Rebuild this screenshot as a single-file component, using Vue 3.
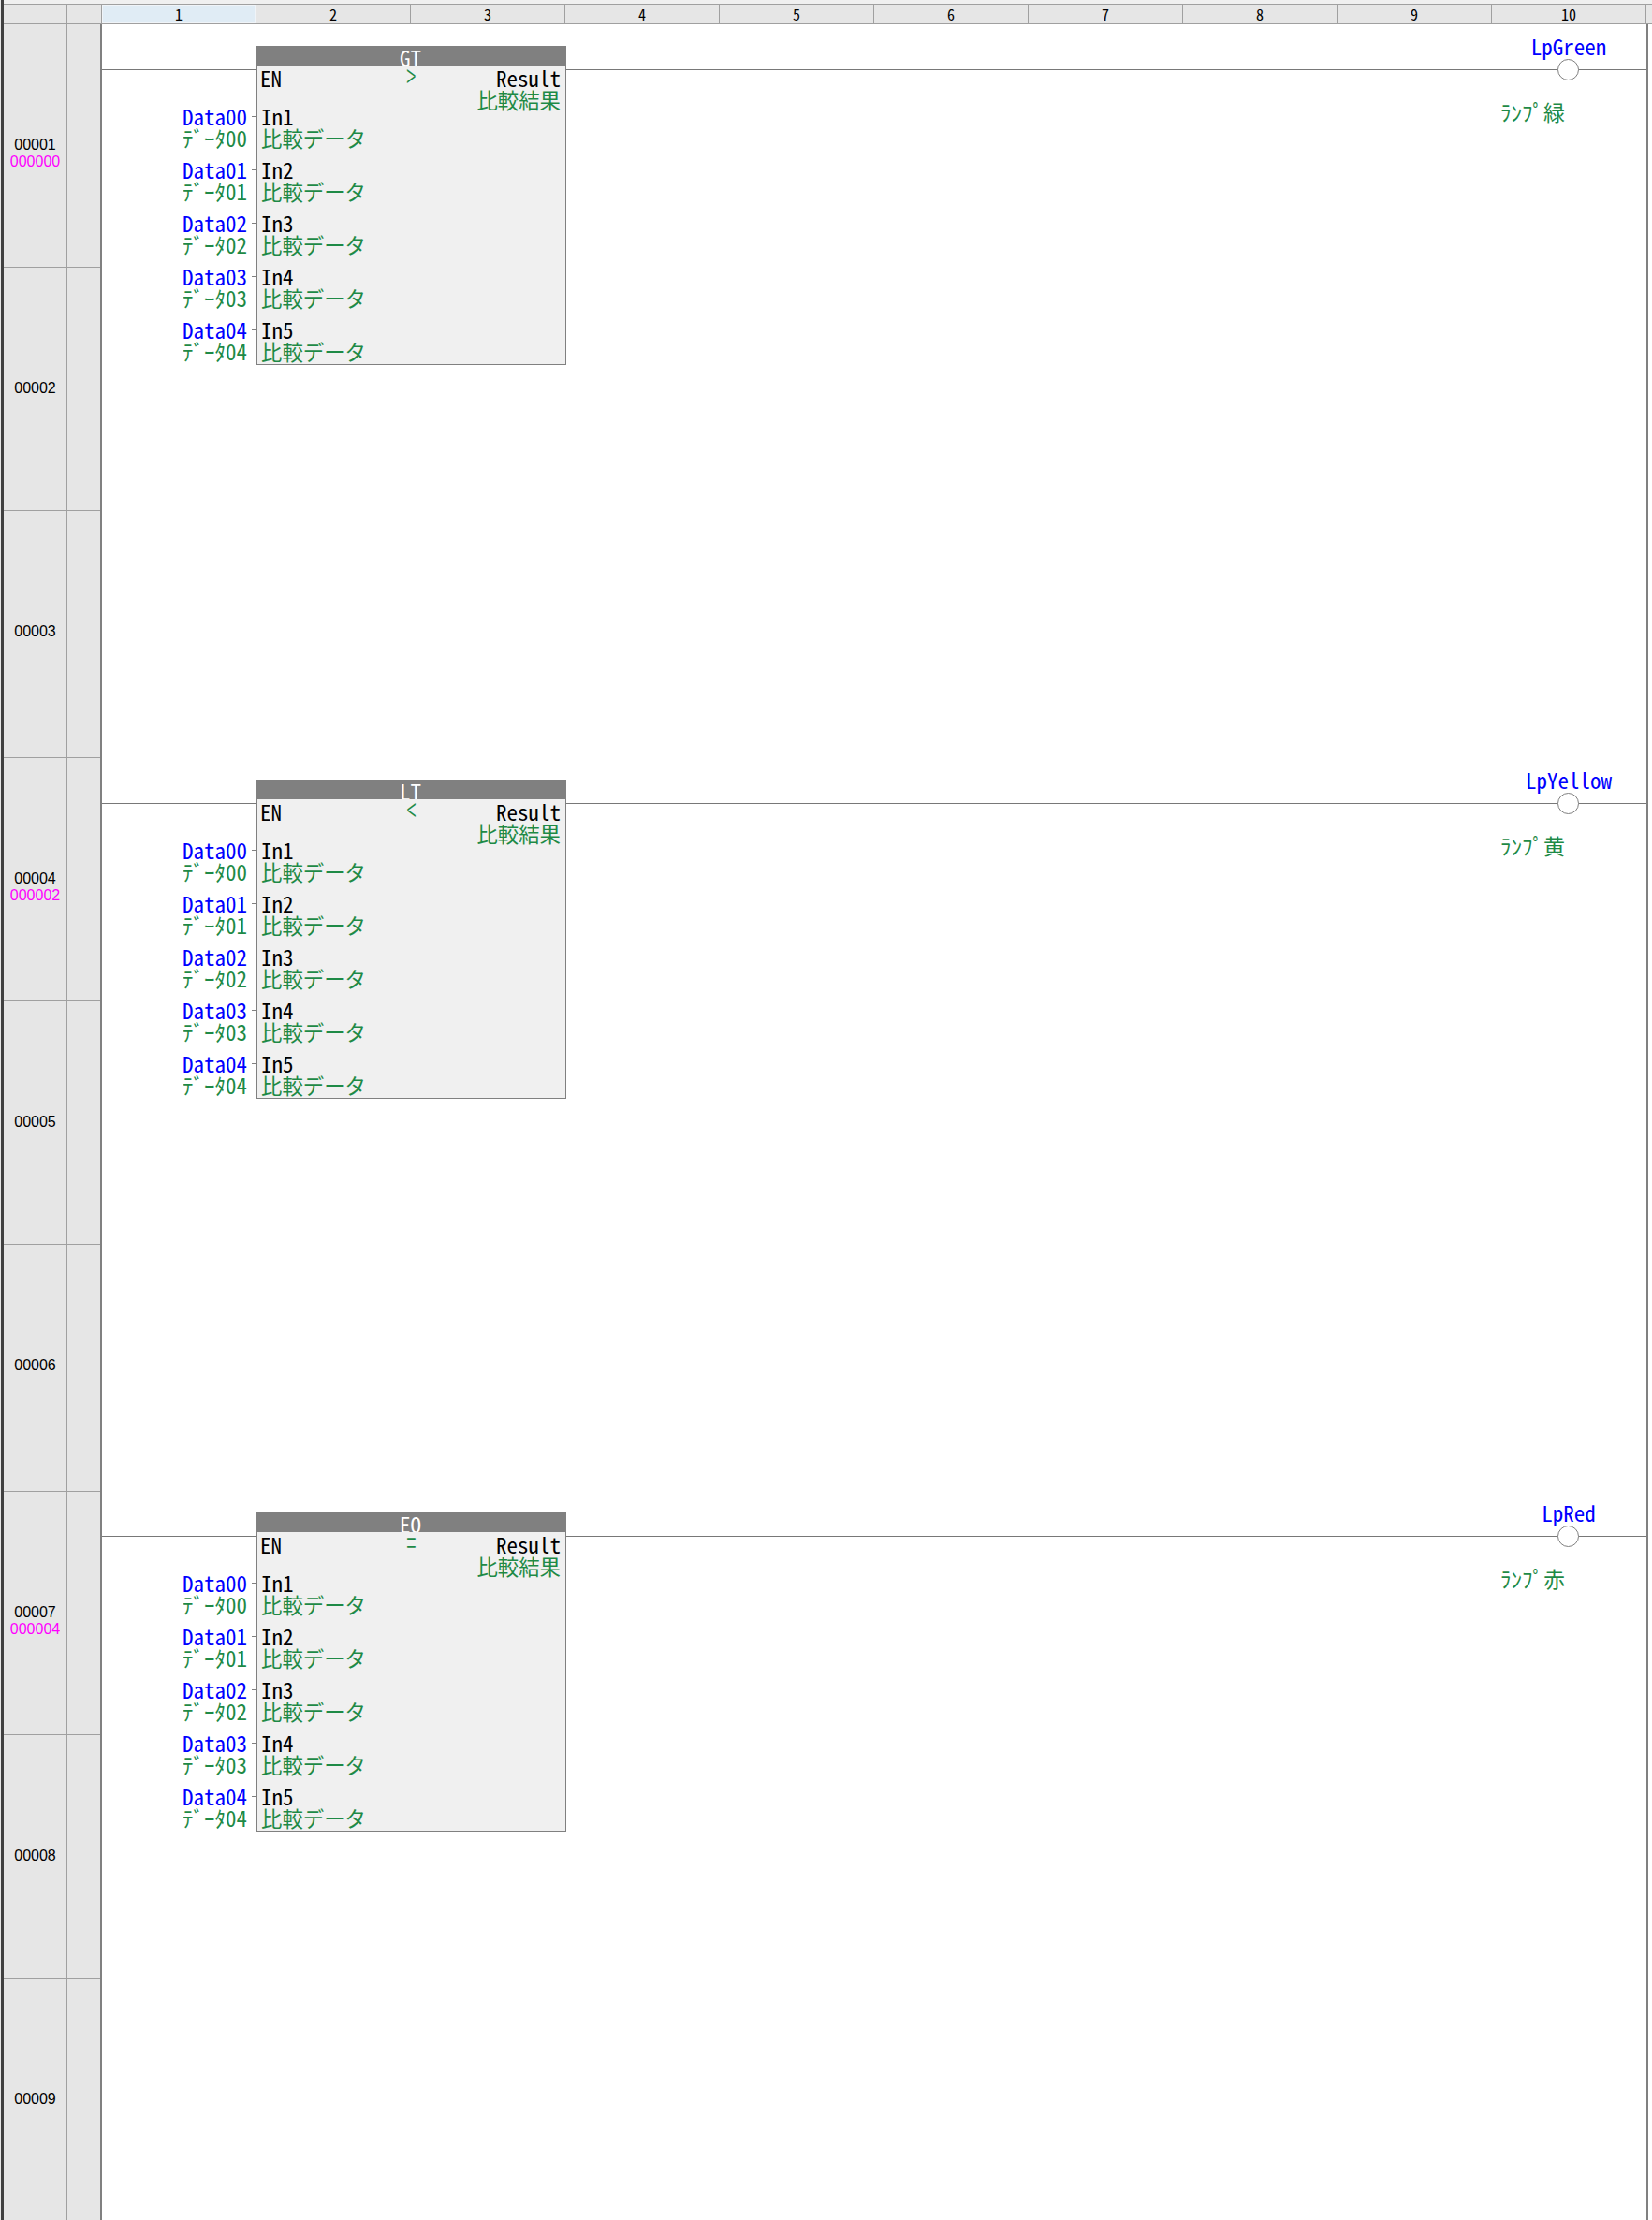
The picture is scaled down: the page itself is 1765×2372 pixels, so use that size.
<script setup>
const cols = [1, 2, 3, 4, 5, 6, 7, 8, 9, 10]
const rows = [
  { n: '00001', s: '000000', h: 260 }, { n: '00002', h: 260 }, { n: '00003', h: 264 },
  { n: '00004', s: '000002', h: 260 }, { n: '00005', h: 260 }, { n: '00006', h: 264 },
  { n: '00007', s: '000004', h: 260 }, { n: '00008', h: 260 }, { n: '00009', h: 264 },
]
const rungs = [
  { name: 'GT', op: '>', coil: 'LpGreen', note: 'ﾗﾝﾌﾟ', color: '緑' },
  { name: 'LT', op: '<', coil: 'LpYellow', note: 'ﾗﾝﾌﾟ', color: '黄' },
  { name: 'EQ', op: '=', coil: 'LpRed', note: 'ﾗﾝﾌﾟ', color: '赤' },
]
const inputs = [0, 1, 2, 3, 4]
</script>

<template>
  <div class="screen">
    <div class="rail"></div>
    <div class="main">
      <div class="top-strip"></div>
      <div class="head">
        <div class="corner c1"></div>
        <div class="corner c2"></div>
        <div v-for="c in cols" :key="c" class="col" :class="{ active: c === 1 }">{{ c }}</div>
      </div>
      <div class="body">
        <div class="gutter">
          <div v-for="r in rows" :key="r.n" class="row" :style="{ height: r.h + 'px' }">
            <div class="row-no">
              <span>{{ r.n }}</span>
              <span v-if="r.s" class="step">{{ r.s }}</span>
            </div>
            <div class="row-side"></div>
          </div>
        </div>
        <div class="canvas">
          <section v-for="r in rungs" :key="r.name" class="rung">
            <div class="wire"></div>
            <div class="fb">
              <div class="fb-title"><span>{{ r.name }}</span></div>
              <div class="fb-body">
                <div class="fb-en">
                  <span class="txt black">EN</span>
                  <span class="op">{{ r.op }}</span>
                  <span class="fb-out">
                    <span class="txt black">Result</span>
                    <span class="txt green kanji">比較結果</span>
                  </span>
                </div>
                <div v-for="i in inputs" :key="i" class="pin">
                  <div class="pin-ext">
                    <span class="txt blue">Data0{{ i }}</span>
                    <span class="txt green">ﾃﾞｰﾀ0{{ i }}</span>
                  </div>
                  <i class="tick"></i>
                  <div class="pin-int">
                    <span class="txt black">In{{ i + 1 }}</span>
                    <span class="txt green kanji">比較データ</span>
                  </div>
                </div>
              </div>
            </div>
            <div class="coil">
              <span class="txt blue coil-name">{{ r.coil }}</span>
              <i class="lamp"></i>
              <span class="txt green coil-note">{{ r.note }}{{ r.color }}</span>
            </div>
          </section>
        </div>
        <div class="edge"></div>
      </div>
    </div>
  </div>
</template>

<style scoped>
.screen {
  display: flex;
  width: 1765px;
  height: 2372px;
  overflow: hidden;
  background: #fff;
  font-family: "Noto Sans CJK JP", sans-serif;
  font-feature-settings: "hwid";
  color: #000;
}
.rail {
  width: 4px;
  flex: none;
  box-sizing: border-box;
  border-left: 1px solid #e6e6e6;
  background: #404040;
}
.main { width: 1761px; flex: none; }
.top-strip { height: 5px; background: #f0f0f0; border-bottom: 1px solid #a0a0a0; box-sizing: border-box; }
.head {
  display: flex;
  height: 21px;
  box-sizing: border-box;
  border-bottom: 1px solid #a0a0a0;
  background: #e6e6e6;
  font-size: 16px;
  line-height: 20px;
}
.corner { border-right: 1px solid #a0a0a0; box-sizing: border-box; }
.c1 { width: 68px; }
.c2 { width: 37px; }
.col {
  width: 165px;
  box-sizing: border-box;
  border-right: 1px solid #a0a0a0;
  text-align: center;
}
.col.active { background: #e0ecf5; box-shadow: inset 0 0 0 1px #f0f4f8; }
.body { display: flex; height: 2346px; }
.gutter {
  width: 105px;
  flex: none;
  box-sizing: border-box;
  background: #e6e6e6;
  border-right: 2px solid #808080;
}
.row {
  display: flex;
  box-sizing: border-box;
  border-bottom: 1px solid #a0a0a0;
}
.row-no {
  width: 68px;
  flex: none;
  box-sizing: border-box;
  border-right: 1px solid #a0a0a0;
  display: flex;
  flex-direction: column;
  align-items: center;
  padding-top: 120px;
  font-family: "Liberation Sans", sans-serif;
  font-size: 16px;
  line-height: 18px;
}
.step { color: #ff00ff; }
.canvas { width: 1650px; flex: none; }
.edge { width: 2px; background: #808080; flex: none; }
.rung { position: relative; height: 784px; }
.rung:nth-child(2) { height: 783px; }
.wire {
  position: absolute;
  left: 0;
  right: 0;
  top: 48px;
  height: 1px;
  background: #787878;
}
.txt { display: block; font-size: 23px; line-height: 23px; white-space: nowrap; }
.kanji { font-size: 22.4px; }
.black { color: #000; }
.blue { color: #0000ff; }
.green { color: #1e8a46; }
.fb {
  position: absolute;
  left: 165px;
  top: 23px;
  width: 331px;
}
.fb-title {
  height: 21px;
  padding-right: 2px;
  background: #808080;
  color: #fff;
  font-size: 23px;
  line-height: 23px;
  text-align: center;
}
.fb-title span { position: relative; top: 1px; }
.fb-body {
  height: 320px;
  box-sizing: border-box;
  background: #f0f0f0;
  border: 1px solid #808080;
  border-top: none;
  padding: 0 3px;
  position: relative;
}
.fb-en { height: 41px; position: relative; padding-top: 2px; }
.op {
  position: absolute;
  left: 155px;
  top: -2px;
  width: 13px;
  text-align: center;
  font-size: 23px;
  line-height: 23px;
  font-weight: 300;
  color: #1e8a46;
  transform: scale(0.85, 1.6);
}
.fb-out {
  position: absolute;
  right: 2px;
  top: 2px;
  text-align: right;
}
.pin { height: 57px; position: relative; margin-left: 1px; }
.pin-ext {
  position: absolute;
  right: 100%;
  margin-right: 15px;
  text-align: right;
  top: 0;
}
.tick {
  position: absolute;
  left: -10px;
  top: 11px;
  width: 6px;
  height: 1px;
  background: #808080;
}
.lamp {
  display: block;
  width: 23px;
  height: 23px;
  box-sizing: border-box;
  border: 1px solid #808080;
  border-radius: 50%;
  background: #fff;
}
.coil {
  position: absolute;
  left: 1484px;
  top: 12px;
  width: 166px;
  height: 120px;
}
.coil-name { position: absolute; left: 0; right: 0; top: 0; text-align: center; }
.coil .lamp { position: absolute; left: 71px; top: 25px; }
.coil-note { position: absolute; left: 10px; top: 70px; }
</style>

<style>
body { margin: 0; }
</style>
